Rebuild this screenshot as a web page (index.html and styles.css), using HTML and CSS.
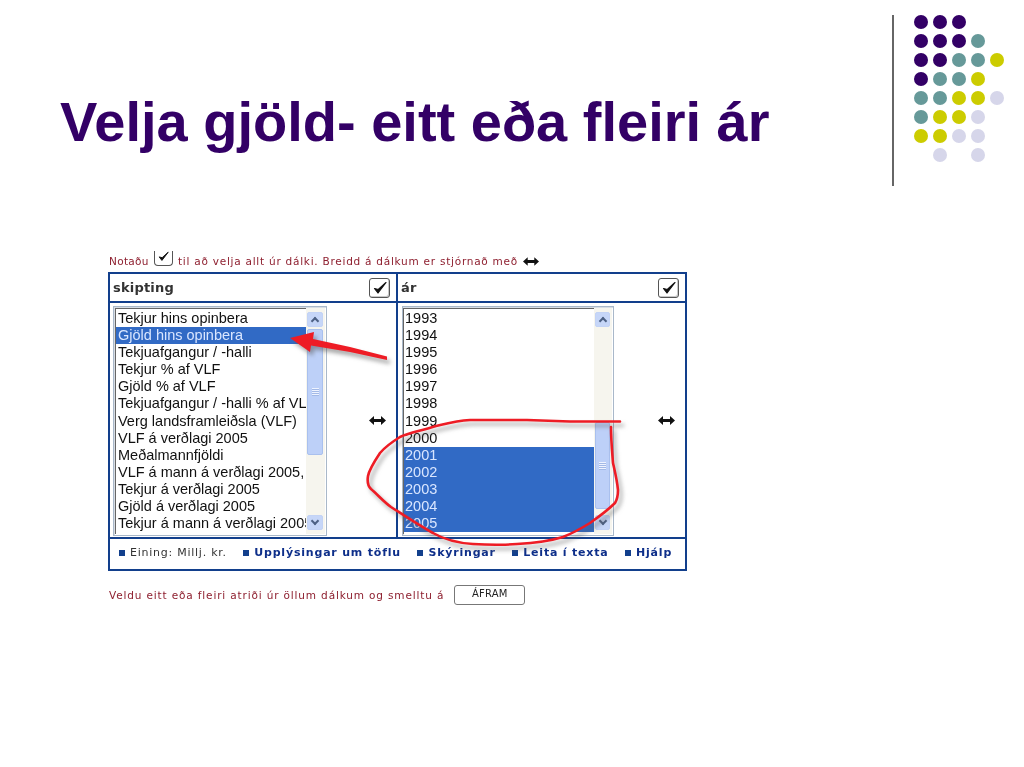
FILE: index.html
```html
<!DOCTYPE html>
<html lang="is">
<head>
    <meta charset="utf-8">
    <title>Velja gjöld</title>
    <link rel="stylesheet" href="styles.css">
</head>
<body>
    <svg class="defs" width="0" height="0">
        <symbol id="ico-check" viewBox="0 0 16 14">
            <path d="M2.5 7.5 L6 12 L14 1.5 L6.3 8.5 Z" fill="#111" stroke="#111" stroke-width="1.2" stroke-linejoin="round"/>
        </symbol>
        <symbol id="ico-resize" viewBox="0 0 17 9">
            <path d="M0 4.5 L5 0 V3 H12 V0 L17 4.5 L12 9 V6 H5 V9 Z" fill="#111"/>
        </symbol>
    </svg>

    <div class="slide">
        <div class="head">
            <h1 class="title">Velja gjöld- eitt eða fleiri ár</h1>
            <div class="deco">
                <div class="deco-line"></div>
                <div class="dots">
                    <i class="p"></i><i class="p"></i><i class="p"></i><i></i><i></i>
                    <i class="p"></i><i class="p"></i><i class="p"></i><i class="t"></i><i></i>
                    <i class="p"></i><i class="p"></i><i class="t"></i><i class="t"></i><i class="y"></i>
                    <i class="p"></i><i class="t"></i><i class="t"></i><i class="y"></i><i></i>
                    <i class="t"></i><i class="t"></i><i class="y"></i><i class="y"></i><i class="l"></i>
                    <i class="t"></i><i class="y"></i><i class="y"></i><i class="l"></i><i></i>
                    <i class="y"></i><i class="y"></i><i class="l"></i><i class="l"></i><i></i>
                    <i></i><i class="l"></i><i></i><i class="l"></i><i></i>
                </div>
            </div>
        </div>

        <div class="shot">
            <div class="note note-top">
                <span class="note-lead">Notaðu</span>
                <span class="mini-check"><svg width="13" height="11"><use href="#ico-check"/></svg></span>
                <span>til að velja allt úr dálki. Breidd á dálkum er stjórnað með</span>
                <svg class="resize-note" width="16" height="9"><use href="#ico-resize"/></svg>
            </div>

            <div class="panel">
                <div class="col-head col-left">
                    <span>skipting</span>
                    <span class="check"><svg width="16" height="14"><use href="#ico-check"/></svg></span>
                </div>
                <div class="col-head">
                    <span>ár</span>
                    <span class="check"><svg width="16" height="14"><use href="#ico-check"/></svg></span>
                </div>

                <div class="col-body col-left">
                    <div class="listbox">
                        <div class="items">
                            <div>Tekjur hins opinbera</div>
                            <div class="sel">Gjöld hins opinbera</div>
                            <div>Tekjuafgangur / -halli</div>
                            <div>Tekjur % af VLF</div>
                            <div>Gjöld % af VLF</div>
                            <div>Tekjuafgangur / -halli % af VLF</div>
                            <div>Verg landsframleiðsla (VLF)</div>
                            <div>VLF á verðlagi 2005</div>
                            <div>Meðalmannfjöldi</div>
                            <div>VLF á mann á verðlagi 2005, þús. kr.</div>
                            <div>Tekjur á verðlagi 2005</div>
                            <div>Gjöld á verðlagi 2005</div>
                            <div>Tekjur á mann á verðlagi 2005</div>
                        </div>
                        <div class="scroll">
                            <div class="sb-btn sb-up"></div>
                            <div class="sb-thumb thumb-left"></div>
                            <div class="sb-btn sb-down"></div>
                        </div>
                    </div>
                    <svg class="resize" width="17" height="9"><use href="#ico-resize"/></svg>
                </div>

                <div class="col-body col-right">
                    <div class="listbox listbox-right">
                        <div class="items">
                            <div>1993</div>
                            <div>1994</div>
                            <div>1995</div>
                            <div>1996</div>
                            <div>1997</div>
                            <div>1998</div>
                            <div>1999</div>
                            <div>2000</div>
                            <div class="sel">2001</div>
                            <div class="sel">2002</div>
                            <div class="sel">2003</div>
                            <div class="sel">2004</div>
                            <div class="sel">2005</div>
                        </div>
                        <div class="scroll">
                            <div class="sb-btn sb-up"></div>
                            <div class="sb-thumb thumb-right"></div>
                            <div class="sb-btn sb-down"></div>
                        </div>
                    </div>
                    <svg class="resize" width="17" height="9"><use href="#ico-resize"/></svg>
                </div>

                <div class="panel-foot">
                    <span class="foot-item plain">Eining: Millj. kr.</span>
                    <a class="foot-item">Upplýsingar um töflu</a>
                    <a class="foot-item">Skýringar</a>
                    <a class="foot-item">Leita í texta</a>
                    <a class="foot-item">Hjálp</a>
                </div>
            </div>

            <div class="note note-bottom">
                <span>Veldu eitt eða fleiri atriði úr öllum dálkum og smelltu á</span>
                <span class="btn-next">ÁFRAM</span>
            </div>
        </div>

        <!-- hand drawn red marks on top of the screenshot -->
        <svg class="marks" width="1024" height="767">
            <g class="marks-g">
                <path d="M387 356.5 L387 360 L350 352 L311 345.5 L310 352 L290 338 L314 332 L313 339 L350 347 Z" fill="#ee1c25"/>
                <path d="M620 421.5 L570 421.5 L527 420 L470 420 C455 421 445 424 436 426 C420 431 408 433 400 437 C392 442 385 447 380 453 C374 462 369 470 368 476 C367 482 368 486 371 489 C378 495 384 502 391 507 C405 516 420 526 433 533 C445 540 458 543 473 544 C490 545 503 545 517 544 C535 543 550 541 563 537 C573 533 582 528 590 523 C600 516 608 510 615 503 C618 498 618 494 618 490 C617 480 615 472 613 463 C612 450 611 440 611 427" fill="none" stroke="#ee1c25" stroke-width="2.6" stroke-linejoin="round" stroke-linecap="round"/>
            </g>
        </svg>
    </div>
</body>
</html>
```

FILE: styles.css
```css
/* slide */

html, body {
    margin: 0;
    padding: 0;
    background: #ffffff;
}

.defs {
    position: absolute;
}

.slide {
    position: relative;
    width: 1024px;
    height: 767px;
    overflow: hidden;
}

.head {
    display: flex;
    justify-content: space-between;
    height: 250px;
}

.title {
    margin: 92px 0 0 60px;
    font-family: "Liberation Sans", Arial, sans-serif;
    font-size: 56px;
    line-height: 60px;
    font-weight: bold;
    color: #330066;
    white-space: nowrap;
}

.deco {
    display: flex;
    align-items: flex-start;
    margin-right: 20px;
    padding-top: 15px;
}

.deco-line {
    width: 2px;
    height: 171px;
    margin-right: 20px;
    background: #666666;
}

.dots {
    display: grid;
    grid-template-columns: repeat(5, 14px);
    grid-auto-rows: 14px;
    gap: 5px;
}

.dots i {
    border-radius: 50%;
}

.dots .p { background: #330066; }
.dots .t { background: #669999; }
.dots .y { background: #cccc00; }
.dots .l { background: #d6d6ea; }

/* the screenshot in the middle of the slide */

.shot {
    margin-left: 108px;
    width: 579px;
    filter: blur(0.3px);
}

.note {
    display: flex;
    align-items: center;
    font-family: "DejaVu Sans", sans-serif;
    font-size: 10.5px;
    letter-spacing: 0.75px;
    color: #8e1f2f;
    white-space: nowrap;
}

.note-top {
    height: 22px;
    padding-left: 1px;
}

.note-lead {
    width: 41px;
    letter-spacing: 0.3px;
}

.mini-check {
    display: flex;
    justify-content: center;
    box-sizing: border-box;
    width: 19px;
    height: 15px;
    margin: -5px 5px 0 4px;
    border: 1px solid #555555;
    border-top: 0;
    border-radius: 0 0 4px 4px;
}

.resize-note {
    margin-left: 5px;
}

.panel {
    display: grid;
    grid-template-columns: 288px 287px;
    grid-template-rows: 29px 236px 30px;
    box-sizing: border-box;
    width: 579px;
    height: 299px;
    border: 2px solid #123f8c;
}

.col-head {
    display: flex;
    align-items: center;
    justify-content: space-between;
    padding: 0 6px 0 3px;
    border-bottom: 2px solid #123f8c;
    font-family: "DejaVu Sans", sans-serif;
    font-size: 13px;
    font-weight: 600;
    letter-spacing: 0.2px;
    color: #333333;
}

.col-left {
    border-right: 2px solid #123f8c;
}

.check {
    display: flex;
    align-items: center;
    justify-content: center;
    box-sizing: border-box;
    width: 21px;
    height: 20px;
    border: 1px solid #555555;
    border-radius: 3px;
    box-shadow: inset -1px -1px 0 #c8c8c8;
}

.col-body {
    display: flex;
    align-items: flex-start;
    padding: 3px 0 0 3px;
    border-bottom: 2px solid #123f8c;
}

.col-right {
    padding-left: 4px;
}

.listbox {
    display: flex;
    box-sizing: border-box;
    width: 214px;
    height: 230px;
    padding: 1px;
    border: 1px solid #a9b8c9;
    box-shadow: inset 1px 1px 0 #d8dde4;
}

.listbox-right {
    width: 212px;
    padding-left: 0;
}

.items {
    width: 190px;
    padding-top: 1px;
    border-top: 1px solid #666666;
    border-left: 1px solid #666666;
    overflow: hidden;
    font-family: "Liberation Sans", Arial, sans-serif;
    font-size: 14.5px;
    line-height: 17.1px;
    color: #111111;
    white-space: nowrap;
}

.items div {
    padding-left: 2px;
}

.listbox-right .items div {
    padding-left: 1px;
}

.items .sel {
    background: #316ac5;
    color: #d9e6ff;
}

.scroll {
    display: flex;
    flex-direction: column;
    flex: 1 0 18px;
    padding: 4px 2px 4px 1px;
    box-sizing: border-box;
    background: #f6f5ee;
}

.sb-btn {
    position: relative;
    flex: 0 0 15px;
    box-sizing: border-box;
    border: 1px solid #c3d3f5;
    border-radius: 2px;
    background: #c6d6f8;
}

.sb-btn::after {
    content: "";
    position: absolute;
    left: 4px;
    width: 4px;
    height: 4px;
    border-left: 2px solid #4d6185;
    border-top: 2px solid #4d6185;
}

.sb-up::after {
    top: 5px;
    transform: rotate(45deg);
}

.sb-down {
    margin-top: auto;
}

.sb-down::after {
    top: 2px;
    transform: rotate(225deg);
}

.sb-thumb {
    display: flex;
    align-items: center;
    justify-content: center;
    box-sizing: border-box;
    margin-top: 2px;
    border: 1px solid #a9c0ee;
    border-radius: 2px;
    background: #bdd0f8;
}

.sb-thumb::after {
    content: "";
    width: 7px;
    height: 8px;
    background: repeating-linear-gradient(#eef3ff 0 1px, #a3b9e6 1px 2px);
}

.thumb-left {
    height: 126px;
}

.thumb-right {
    height: 87px;
    margin-top: 95px;
}

.resize {
    margin: 110px 0 0 42px;
}

.listbox-right + .resize {
    margin-left: 44px;
}

.panel-foot {
    grid-column: 1 / 3;
    display: flex;
    align-items: center;
    gap: 16.5px;
    padding: 0 0 3px 9px;
    font-family: "DejaVu Sans", sans-serif;
    font-size: 11px;
    font-weight: bold;
    letter-spacing: 0.8px;
    color: #0e2f8a;
    white-space: nowrap;
}

.foot-item::before {
    content: "";
    display: inline-block;
    width: 6px;
    height: 6px;
    margin-right: 5px;
    background: #123f8c;
}

.foot-item.plain {
    font-weight: normal;
    letter-spacing: 0.75px;
    color: #333333;
}

.note-bottom {
    height: 48px;
    padding-left: 1px;
    letter-spacing: 0.85px;
}

.btn-next {
    box-sizing: border-box;
    width: 71px;
    height: 20px;
    margin-left: 10px;
    border: 1px solid #777777;
    border-radius: 3px;
    font-size: 10px;
    line-height: 16px;
    letter-spacing: 0.2px;
    text-align: center;
    color: #222222;
}

/* red marks */

.marks {
    position: absolute;
    top: 0;
    left: 0;
}

.marks-g {
    filter: drop-shadow(3px 4px 2px rgba(90, 90, 90, 0.55));
}
```
